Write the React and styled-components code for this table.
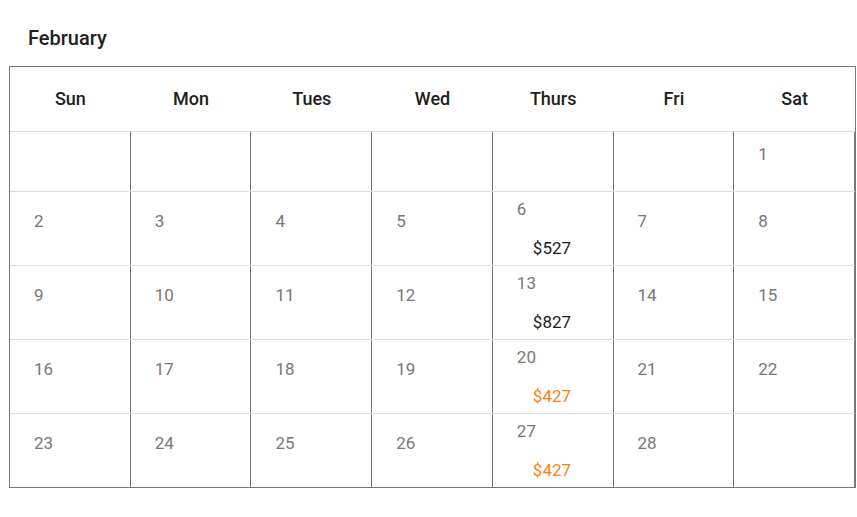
import React from "react";
import styled, { createGlobalStyle } from "styled-components";

const GlobalStyle = createGlobalStyle`
  body {
    margin: 0;
    background: #fff;
    font-family: Roboto, "Liberation Sans", Arial, sans-serif;
  }
`;

const Page = styled.div`
  padding: 26px 0 0 9px;
`;

const Title = styled.h2`
  margin: 0 0 16px 19px;
  font-size: 20px;
  line-height: 24px;
  font-weight: 500;
  color: #212121;
`;

const Table = styled.div`
  width: 847px;
  box-sizing: border-box;
  border: 1px solid #777;
`;

const HeadRow = styled.div`
  display: grid;
  grid-template-columns: repeat(7, 1fr);
  height: 65px;
  padding-bottom: 1px;
  box-sizing: border-box;
  border-bottom: 1px solid #ddd;
`;

const HeadCell = styled.div`
  display: flex;
  align-items: center;
  justify-content: center;
  font-size: 18px;
  font-weight: 500;
  color: #212121;
`;

const Week = styled.div`
  display: grid;
  grid-template-columns: repeat(7, 1fr);
  height: ${(p) => (p.$short ? "59px" : "74px")};
  box-sizing: border-box;
  & + & {
    border-top: 1px solid #ddd;
  }
`;

const Cell = styled.div`
  display: flex;
  flex-direction: column;
  justify-content: center;
  padding-left: 24px;
  border-right: 1px solid #777;
`;

const Day = styled.div`
  font-size: 17px;
  line-height: 20px;
  color: #777;
  margin-bottom: ${(p) => (p.$alone ? "16px" : "0")};
`;

const Price = styled.div`
  margin: 19px 0 0 16px;
  font-size: 17px;
  line-height: 20px;
  color: ${(p) => (p.$hot ? "#ff7f0e" : "#212121")};
`;

const days = ["Sun", "Mon", "Tues", "Wed", "Thurs", "Fri", "Sat"];

const prices = {
  6: { value: "$527" },
  13: { value: "$827" },
  20: { value: "$427", hot: true },
  27: { value: "$427", hot: true },
};

// February starts on a Saturday
const weeks = [];
for (let w = 0; w < 5; w++) {
  const row = [];
  for (let d = 0; d < 7; d++) {
    const n = w * 7 + d - 5;
    row.push(n >= 1 && n <= 28 ? n : null);
  }
  weeks.push(row);
}

const App = () => {
  return (
    <Page>
      <GlobalStyle />
      <Title>February</Title>
      <Table>
        <HeadRow>
          {days.map((d) => (
            <HeadCell key={d}>{d}</HeadCell>
          ))}
        </HeadRow>
        {weeks.map((row, i) => (
          <Week key={i} $short={i === 0}>
            {row.map((n, j) => (
              <Cell key={j}>
                {n && <Day $alone={!prices[n]}>{n}</Day>}
                {n && prices[n] && (
                  <Price $hot={prices[n].hot}>{prices[n].value}</Price>
                )}
              </Cell>
            ))}
          </Week>
        ))}
      </Table>
    </Page>
  );
};

export default App;
